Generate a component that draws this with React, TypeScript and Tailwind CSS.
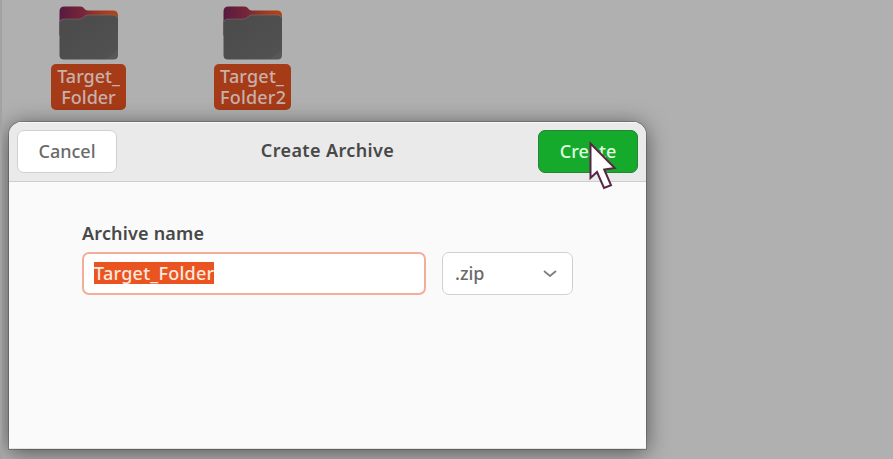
type FolderProps = { id: string; lines: [string, string]; width: string; align: string };

function FolderIcon({ id }: { id: string }) {
  return (
    <svg width="60" height="55" viewBox="0 0 60 55" className="block">
      <defs>
        <linearGradient id={`${id}-back`} x1="0" y1="0" x2="1" y2="0">
          <stop offset="0" stopColor="#561b42" />
          <stop offset="0.2" stopColor="#68203a" />
          <stop offset="0.42" stopColor="#78263a" />
          <stop offset="0.55" stopColor="#8f3028" />
          <stop offset="0.8" stopColor="#a53f22" />
          <stop offset="1" stopColor="#b84218" />
        </linearGradient>
        <linearGradient id={`${id}-front`} x1="0" y1="0" x2="1" y2="1">
          <stop offset="0" stopColor="#4a4a4a" />
          <stop offset="0.89" stopColor="#515151" />
          <stop offset="0.9" stopColor="#575757" />
        </linearGradient>
      </defs>
      <path d="M.5 5.500q0-5 5-5h16q2.500 0 3.500 1.800t3.500 2.200H54q5 0 5 5v20H.5z" fill={`url(#${id}-back)`} />
      <path d="M.5 17q0-4 4-4H21c3 0 4-4 8-4h26q4 0 4 4v36q0 4.500-4.500 4.500H5Q.5 53.500.5 49z" fill={`url(#${id}-front)`} />
      <path d="M1 16q.5-3 4-3H21c3 0 4-4 8-4h25q4 0 4.500 3" fill="none" stroke="#888" strokeOpacity=".5" strokeWidth=".8" />
    </svg>
  );
}

function Folder({ id, lines, width, align }: FolderProps) {
  return (
    <div className={`flex flex-col items-center ${width}`}>
      <FolderIcon id={id} />
      <div className={`mt-[3px] flex h-[46px] w-full flex-col justify-center rounded-[5px] bg-[#a63b18] px-[5px] pb-[1px] text-[18px] leading-[21px] font-medium text-[#c8b0aa] ${align}`}>
        <span>{lines[0]}</span>
        <span>{lines[1]}</span>
      </div>
    </div>
  );
}

export default function App() {
  return (
    <main className="relative h-[459px] w-[893px] overflow-hidden border-l-2 border-[#a2a2a2] bg-[#b0b0b0] font-['Noto_Sans',sans-serif]">
      <div className="flex gap-[88px] pt-[6px] pl-[49px]">
        <Folder id="first" lines={["Target_", "Folder"]} width="w-[75px]" align="text-center" />
        <Folder id="second" lines={["Target_", "Folder2"]} width="w-[77px]" align="items-start pl-[6px] tracking-[0.2px]" />
      </div>
      <section className="absolute top-[122px] left-[7px] flex h-[327px] w-[637px] flex-col overflow-hidden rounded-t-[13px] bg-[#fafafa] shadow-[0_0_0_1px_rgba(0,0,0,.2),0_3px_22px_rgba(0,0,0,.55)]">
        <header className="flex h-[60px] shrink-0 items-center justify-between border-t border-b border-t-[#f8f8f8] border-b-[#cecece] bg-[#eaeaea] px-[8px] pb-[2px] text-[18px] text-[#484848]">
          <button className="h-[43px] w-[100px] rounded-[7px] border border-[#d0d0d0] bg-white font-medium text-[#6a6a6a]">Cancel</button>
          <h1 className="pb-px font-semibold tracking-[0.38px]">Create Archive</h1>
          <button className="h-[43px] w-[100px] rounded-[7px] border border-[#278236] bg-[#15aa2b] font-medium text-[#e0fbe0]">Create</button>
        </header>
        <form className="flex flex-col pt-[38px] pl-[73px]">
          <label className="h-[32px] text-[18px] leading-[26px] font-semibold tracking-[0.18px] text-[#484848]">Archive name</label>
          <div className="flex gap-[16px]">
            <div className="flex h-[43px] w-[344px] items-center rounded-[7px] border-2 border-[#f4ad98] bg-white pb-[2px] pl-[10px]">
              <span className="h-[22px] bg-[#e95420] text-[18px] leading-[23px] font-medium tracking-[0.26px] text-[#ffe7df]">Target_Folder</span>
            </div>
            <div className="flex h-[43px] w-[131px] items-center justify-between rounded-[7px] border border-[#d0d0d0] bg-white pr-[15px] pl-[12px] text-[18px] font-medium text-[#6a6a6a]">
              <span>.zip</span>
              <svg width="14" height="8" viewBox="0 0 14 8" className="block"><path d="m1 1 6 5 6-5" fill="none" stroke="#808080" strokeWidth="1.8" /></svg>
            </div>
          </div>
        </form>
        <div className="mt-auto h-[1px] w-full bg-[#e2e2e2]" />
      </section>
      <svg className="absolute top-[140px] left-[586px]" width="30" height="52" viewBox="0 0 30 52">
        <path d="M2.500 3.500v34.500l6.500-6 7 16 7-2.800-6.800-15.700 10.500-1.500z" fill="#fff" stroke="#5b2447" strokeWidth="2" />
      </svg>
    </main>
  );
}
